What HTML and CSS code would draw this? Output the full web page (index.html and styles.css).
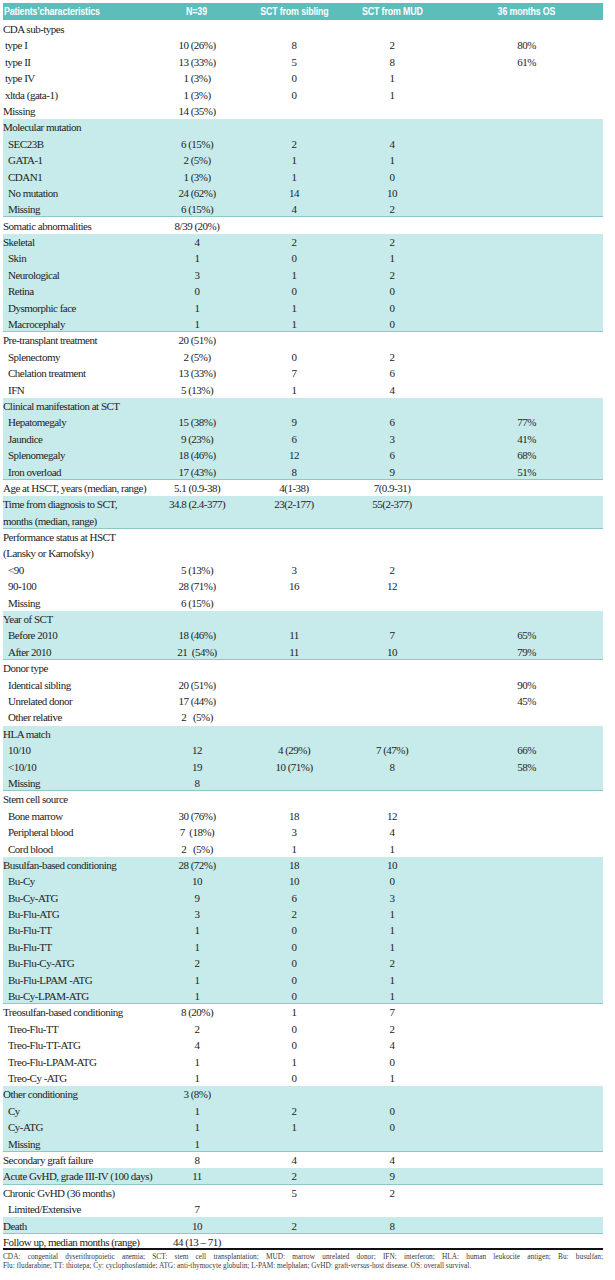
FILE: index.html
```html
<!DOCTYPE html>
<html lang="en">
<head>
<meta charset="utf-8">
<title>Patients' characteristics</title>
<link rel="stylesheet" href="styles.css">
</head>
<body>
<div class="page">
  <div class="table">
    <div class="row head">
      <div class="c lab"><span class="hx">Patients’characteristics</span></div>
      <div class="c"><span class="hx">N=39</span></div>
      <div class="c"><span class="hx">SCT from sibling</span></div>
      <div class="c"><span class="hx">SCT from MUD</span></div>
      <div class="c os"><span class="hx">36 months OS</span></div>
    </div>

    <div class="grp">
      <div class="row"><div class="c lab">CDA sub-types</div></div>
      <div class="row"><div class="c lab in1">type I</div><div class="c">10 (26%)</div><div class="c">8</div><div class="c">2</div><div class="c os">80%</div></div>
      <div class="row"><div class="c lab in1">type II</div><div class="c">13 (33%)</div><div class="c">5</div><div class="c">8</div><div class="c os">61%</div></div>
      <div class="row"><div class="c lab in1">type IV</div><div class="c">1 (3%)</div><div class="c">0</div><div class="c">1</div></div>
      <div class="row"><div class="c lab in1">xltda (gata-1)</div><div class="c">1 (3%)</div><div class="c">0</div><div class="c">1</div></div>
      <div class="row"><div class="c lab">Missing</div><div class="c">14 (35%)</div></div>
    </div>

    <div class="grp band">
      <div class="row"><div class="c lab">Molecular mutation</div></div>
      <div class="row"><div class="c lab in">SEC23B</div><div class="c">6 (15%)</div><div class="c">2</div><div class="c">4</div></div>
      <div class="row"><div class="c lab in">GATA-1</div><div class="c">2 (5%)</div><div class="c">1</div><div class="c">1</div></div>
      <div class="row"><div class="c lab in">CDAN1</div><div class="c">1 (3%)</div><div class="c">1</div><div class="c">0</div></div>
      <div class="row"><div class="c lab in">No mutation</div><div class="c">24 (62%)</div><div class="c">14</div><div class="c">10</div></div>
      <div class="row"><div class="c lab in">Missing</div><div class="c">6 (15%)</div><div class="c">4</div><div class="c">2</div></div>
    </div>

    <div class="grp">
      <div class="row"><div class="c lab">Somatic abnormalities</div><div class="c">8/39 (20%)</div></div>
    </div>

    <div class="grp band">
      <div class="row"><div class="c lab">Skeletal</div><div class="c">4</div><div class="c">2</div><div class="c">2</div></div>
      <div class="row"><div class="c lab in">Skin</div><div class="c">1</div><div class="c">0</div><div class="c">1</div></div>
      <div class="row"><div class="c lab in">Neurological</div><div class="c">3</div><div class="c">1</div><div class="c">2</div></div>
      <div class="row"><div class="c lab in">Retina</div><div class="c">0</div><div class="c">0</div><div class="c">0</div></div>
      <div class="row"><div class="c lab in">Dysmorphic face</div><div class="c">1</div><div class="c">1</div><div class="c">0</div></div>
      <div class="row"><div class="c lab in">Macrocephaly</div><div class="c">1</div><div class="c">1</div><div class="c">0</div></div>
    </div>

    <div class="grp">
      <div class="row"><div class="c lab">Pre-transplant treatment</div><div class="c">20 (51%)</div></div>
      <div class="row"><div class="c lab in">Splenectomy</div><div class="c">2 (5%)</div><div class="c">0</div><div class="c">2</div></div>
      <div class="row"><div class="c lab in">Chelation treatment</div><div class="c">13 (33%)</div><div class="c">7</div><div class="c">6</div></div>
      <div class="row"><div class="c lab in">IFN</div><div class="c">5 (13%)</div><div class="c">1</div><div class="c">4</div></div>
    </div>

    <div class="grp band">
      <div class="row"><div class="c lab">Clinical manifestation at SCT</div></div>
      <div class="row"><div class="c lab in">Hepatomegaly</div><div class="c">15 (38%)</div><div class="c">9</div><div class="c">6</div><div class="c os">77%</div></div>
      <div class="row"><div class="c lab in">Jaundice</div><div class="c">9 (23%)</div><div class="c">6</div><div class="c">3</div><div class="c os">41%</div></div>
      <div class="row"><div class="c lab in">Splenomegaly</div><div class="c">18 (46%)</div><div class="c">12</div><div class="c">6</div><div class="c os">68%</div></div>
      <div class="row"><div class="c lab in">Iron overload</div><div class="c">17 (43%)</div><div class="c">8</div><div class="c">9</div><div class="c os">51%</div></div>
    </div>

    <div class="grp">
      <div class="row"><div class="c lab">Age at HSCT, years (median, range)</div><div class="c">5.1 (0.9-38)</div><div class="c">4(1-38)</div><div class="c">7(0.9-31)</div></div>
    </div>

    <div class="grp band">
      <div class="row"><div class="c lab">Time from diagnosis to SCT,</div><div class="c">34.8 (2.4-377)</div><div class="c">23(2-177)</div><div class="c">55(2-377)</div></div>
      <div class="row"><div class="c lab">months (median, range)</div></div>
    </div>

    <div class="grp">
      <div class="row"><div class="c lab">Performance status at HSCT</div></div>
      <div class="row"><div class="c lab">(Lansky or Karnofsky)</div></div>
      <div class="row"><div class="c lab in">&lt;90</div><div class="c">5 (13%)</div><div class="c">3</div><div class="c">2</div></div>
      <div class="row"><div class="c lab in">90-100</div><div class="c">28 (71%)</div><div class="c">16</div><div class="c">12</div></div>
      <div class="row"><div class="c lab in">Missing</div><div class="c">6 (15%)</div></div>
    </div>

    <div class="grp band">
      <div class="row"><div class="c lab">Year of SCT</div></div>
      <div class="row"><div class="c lab in">Before 2010</div><div class="c">18 (46%)</div><div class="c">11</div><div class="c">7</div><div class="c os">65%</div></div>
      <div class="row"><div class="c lab in">After 2010</div><div class="c">21  (54%)</div><div class="c">11</div><div class="c">10</div><div class="c os">79%</div></div>
    </div>

    <div class="grp">
      <div class="row"><div class="c lab">Donor type</div></div>
      <div class="row"><div class="c lab in">Identical sibling</div><div class="c">20 (51%)</div><div class="c"></div><div class="c"></div><div class="c os">90%</div></div>
      <div class="row"><div class="c lab in">Unrelated donor</div><div class="c">17 (44%)</div><div class="c"></div><div class="c"></div><div class="c os">45%</div></div>
      <div class="row"><div class="c lab in">Other relative</div><div class="c">2   (5%)</div></div>
    </div>

    <div class="grp band">
      <div class="row"><div class="c lab">HLA match</div></div>
      <div class="row"><div class="c lab in">10/10</div><div class="c">12</div><div class="c">4 (29%)</div><div class="c">7 (47%)</div><div class="c os">66%</div></div>
      <div class="row"><div class="c lab in">&lt;10/10</div><div class="c">19</div><div class="c">10 (71%)</div><div class="c">8</div><div class="c os">58%</div></div>
      <div class="row"><div class="c lab in">Missing</div><div class="c">8</div></div>
    </div>

    <div class="grp">
      <div class="row"><div class="c lab">Stem cell source</div></div>
      <div class="row"><div class="c lab in">Bone marrow</div><div class="c">30 (76%)</div><div class="c">18</div><div class="c">12</div></div>
      <div class="row"><div class="c lab in">Peripheral blood</div><div class="c">7  (18%)</div><div class="c">3</div><div class="c">4</div></div>
      <div class="row"><div class="c lab in">Cord blood</div><div class="c">2   (5%)</div><div class="c">1</div><div class="c">1</div></div>
    </div>

    <div class="grp band">
      <div class="row"><div class="c lab">Busulfan-based conditioning</div><div class="c">28 (72%)</div><div class="c">18</div><div class="c">10</div></div>
      <div class="row"><div class="c lab in">Bu-Cy</div><div class="c">10</div><div class="c">10</div><div class="c">0</div></div>
      <div class="row"><div class="c lab in">Bu-Cy-ATG</div><div class="c">9</div><div class="c">6</div><div class="c">3</div></div>
      <div class="row"><div class="c lab in">Bu-Flu-ATG</div><div class="c">3</div><div class="c">2</div><div class="c">1</div></div>
      <div class="row"><div class="c lab in">Bu-Flu-TT</div><div class="c">1</div><div class="c">0</div><div class="c">1</div></div>
      <div class="row"><div class="c lab in">Bu-Flu-TT</div><div class="c">1</div><div class="c">0</div><div class="c">1</div></div>
      <div class="row"><div class="c lab in">Bu-Flu-Cy-ATG</div><div class="c">2</div><div class="c">0</div><div class="c">2</div></div>
      <div class="row"><div class="c lab in">Bu-Flu-LPAM -ATG</div><div class="c">1</div><div class="c">0</div><div class="c">1</div></div>
      <div class="row"><div class="c lab in">Bu-Cy-LPAM-ATG</div><div class="c">1</div><div class="c">0</div><div class="c">1</div></div>
    </div>

    <div class="grp">
      <div class="row"><div class="c lab">Treosulfan-based conditioning</div><div class="c">8 (20%)</div><div class="c">1</div><div class="c">7</div></div>
      <div class="row"><div class="c lab in">Treo-Flu-TT</div><div class="c">2</div><div class="c">0</div><div class="c">2</div></div>
      <div class="row"><div class="c lab in">Treo-Flu-TT-ATG</div><div class="c">4</div><div class="c">0</div><div class="c">4</div></div>
      <div class="row"><div class="c lab in">Treo-Flu-LPAM-ATG</div><div class="c">1</div><div class="c">1</div><div class="c">0</div></div>
      <div class="row"><div class="c lab in">Treo-Cy -ATG</div><div class="c">1</div><div class="c">0</div><div class="c">1</div></div>
    </div>

    <div class="grp band">
      <div class="row"><div class="c lab">Other conditioning</div><div class="c">3 (8%)</div></div>
      <div class="row"><div class="c lab in">Cy</div><div class="c">1</div><div class="c">2</div><div class="c">0</div></div>
      <div class="row"><div class="c lab in">Cy-ATG</div><div class="c">1</div><div class="c">1</div><div class="c">0</div></div>
      <div class="row"><div class="c lab in">Missing</div><div class="c">1</div></div>
    </div>

    <div class="grp">
      <div class="row"><div class="c lab">Secondary graft failure</div><div class="c">8</div><div class="c">4</div><div class="c">4</div></div>
    </div>

    <div class="grp band">
      <div class="row"><div class="c lab">Acute GvHD, grade III-IV (100 days)</div><div class="c">11</div><div class="c">2</div><div class="c">9</div></div>
    </div>

    <div class="grp">
      <div class="row"><div class="c lab">Chronic GvHD (36 months)</div><div class="c"></div><div class="c">5</div><div class="c">2</div></div>
      <div class="row"><div class="c lab in">Limited/Extensive</div><div class="c">7</div></div>
    </div>

    <div class="grp band">
      <div class="row"><div class="c lab">Death</div><div class="c">10</div><div class="c">2</div><div class="c">8</div></div>
    </div>

    <div class="grp last">
      <div class="row"><div class="c lab">Follow up, median months (range)</div><div class="c">44 (13 – 71)</div></div>
    </div>
  </div>

  <div class="notes">
    <div class="note1">CDA: congenital dyserithropoietic anemia; SCT: stem cell transplantation; MUD: marrow unrelated donor; IFN: interferon; HLA: human leukocite antigen; Bu: busulfan;</div>
    <div class="note2">Flu: fludarabine; TT: thiotepa; Cy: cyclophosfamide; ATG: anti-thymocyte globulin; L-PAM: melphalan; GvHD: graft-<i>versus</i>-host disease. OS: overall survival.</div>
  </div>
</div>
</body>
</html>
```

FILE: styles.css
```css
html, body {
  margin: 0;
  padding: 0;
  background: #ffffff;
}

.page {
  width: 600px;
  padding: 3px 0 0 3px;
  font-family: "Liberation Serif", "Times New Roman", serif;
  color: #1d1d1d;
}

.table {
  width: 600px;
}

.row {
  display: grid;
  grid-template-columns: 147px 94px 100px 96px 163px;
  height: 16.4px;
  align-items: center;
}

.c {
  text-align: center;
  white-space: pre;
  font-size: 11px;
  letter-spacing: -0.5px;
  line-height: 12px;
}

.c.os {
  padding-left: 10px;
}

.c.lab {
  text-align: left;
  overflow: visible;
}

.c.lab.in {
  padding-left: 5px;
}

.c.lab.in1 {
  padding-left: 2px;
}

.head {
  height: 17px;
  background: #5cbebb;
  color: #ffffff;
  margin-bottom: 0.8px;
}

.head .c {
  font-family: "Liberation Sans", Arial, sans-serif;
  font-weight: bold;
  font-size: 11.5px;
  letter-spacing: -0.2px;
  line-height: 13px;
}

.hx {
  display: inline-block;
  transform: scaleX(0.77);
  transform-origin: center center;
}

.head .c.lab {
  padding-left: 1px;
}

.head .c.lab .hx {
  transform-origin: left center;
}

.grp.band {
  background: #c7ebeb;
  box-shadow: inset 0 -1px 0 #8fc6c6;
}

.grp.last {
  box-shadow: inset 0 -2px 0 #111111;
}

.notes {
  margin-top: 3px;
  font-family: "Liberation Serif", "Times New Roman", serif;
  font-size: 7.3px;
  line-height: 8.6px;
  color: #3a3a3a;
}

.note1 {
  text-align: justify;
  text-align-last: justify;
}

.note2 {
  text-align: left;
}
```
